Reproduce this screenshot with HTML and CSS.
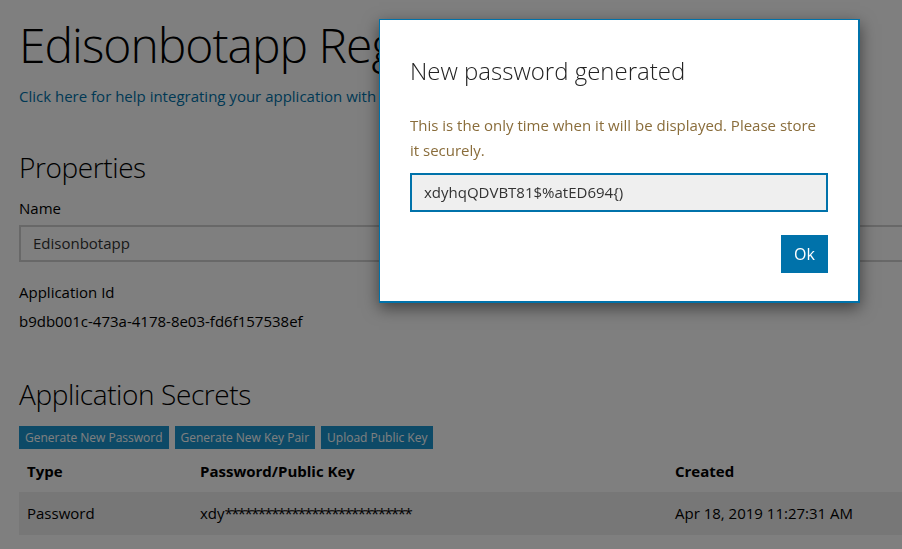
FILE: index.html
```html
<!DOCTYPE html>
<html>
<head>
<meta charset="utf-8">
<link rel="stylesheet" href="styles.css">
</head>
<body>
<div class="page">
  <h1 class="title">Edisonbotapp Registration</h1>
  <a class="help" href="#">Click here for help integrating your application with Microsoft.</a>

  <h2 class="section">Properties</h2>
  <div class="label label-name">Name</div>
  <div class="field">Edisonbotapp</div>
  <div class="label label-id">Application Id</div>
  <div class="value">b9db001c-473a-4178-8e03-fd6f157538ef</div>

  <h2 class="section section-secrets">Application Secrets</h2>
  <div class="actions">
    <button class="btn">Generate New Password</button>
    <button class="btn">Generate New Key Pair</button>
    <button class="btn">Upload Public Key</button>
  </div>
  <table class="grid">
    <thead>
      <tr><th class="c1">Type</th><th class="c2">Password/Public Key</th><th class="c3">Created</th></tr>
    </thead>
    <tbody>
      <tr class="odd"><td>Password</td><td>xdy<span class="mask">****************************</span></td><td>Apr 18, 2019 11:27:31 AM</td></tr>
    </tbody>
  </table>
</div>

<div class="overlay"></div>
<div class="modal">
  <h3 class="modal-title">New password generated</h3>
  <p class="warn">This is the only time when it will be displayed. Please store it securely.</p>
  <div class="secret">xdyhqQDVBT81$%atED694{)</div>
  <div class="modal-foot"><button class="ok">Ok</button></div>
</div>
</body>
</html>
```
FILE: styles.css
```css
html, body {
  margin: 0;
  padding: 0;
  background: #ffffff;
  overflow: hidden;
  width: 902px;
  height: 549px;
}
body {
  font-family: "Open Sans", "Noto Sans", sans-serif;
  color: #000;
  font-size: 15px;
}
.page {
  width: 1000px;
  padding: 13px 0 0 19px;
  box-sizing: border-box;
}
.title {
  margin: 0;
  font-size: 48px;
  font-weight: 300;
  line-height: 64px;
  letter-spacing: -1px;
}
.help {
  display: block;
  margin-top: 8px;
  color: #0072aa;
  text-decoration: none;
  font-size: 15px;
  line-height: 22px;
}
.section {
  margin: 40px 0 0;
  font-size: 28px;
  font-weight: 300;
  line-height: 40px;
  letter-spacing: -0.4px;
}
.label {
  font-size: 15px;
  line-height: 24px;
}
.label-name {
  margin-top: 9px;
}
.field {
  margin-top: 5px;
  height: 33px;
  border: 2px solid #d0d0d0;
  padding: 0 12px;
  line-height: 33px;
  font-size: 15px;
  color: #333;
}
.label-id {
  margin-top: 18px;
}
.value {
  margin-top: 5px;
  line-height: 24px;
  font-size: 15px;
}
.section-secrets {
  margin-top: 41px;
}
.actions {
  display: flex;
  gap: 6px;
  margin-top: 12px;
}
.btn {
  border: 0;
  margin: 0;
  background: #1a95cf;
  color: #fff;
  font-family: inherit;
  font-size: 12px;
  height: 23px;
  padding: 0 6px;
  line-height: 23px;
}
.grid {
  border-collapse: collapse;
  width: 980px;
  margin-top: 1px;
  font-size: 15px;
}
.grid th {
  text-align: left;
  font-weight: 700;
  padding: 8px 8px 7px;
  line-height: 27px;
}
.grid td {
  padding: 8px 8px;
  line-height: 27px;
}
.grid .c1 { width: 157px; }
.grid .c2 { width: 459px; }
.grid tr.odd { background: #eeeeee; }
.mask {
  letter-spacing: -1.6px;
}
.overlay {
  position: fixed;
  inset: 0;
  background: rgba(0, 0, 0, 0.5);
}
.modal {
  position: absolute;
  left: 379px;
  top: 19px;
  width: 418px;
  height: 281px;
  padding: 0 30px 0 30px;
  background: #fff;
  border: 1px solid #0072aa;
  border-right-width: 2px;
  border-bottom-width: 2px;
  box-shadow: 0 5px 15px rgba(0, 0, 0, 0.5);
}
.modal-title {
  margin: 33px 0 0;
  font-size: 24px;
  font-weight: 300;
  line-height: 36px;
  color: #222;
}
.warn {
  margin: 24px 0 0;
  color: #8a6d3b;
  font-size: 15px;
  line-height: 25px;
}
.secret {
  margin-top: 10px;
  height: 35px;
  border: 2px solid #0072aa;
  background: #efefef;
  padding: 0 12px;
  line-height: 35px;
  font-size: 15px;
  color: #333;
}
.modal-foot {
  display: flex;
  justify-content: flex-end;
  margin-top: 23px;
}
.ok {
  border: 0;
  background: #0072aa;
  color: #fff;
  font-family: inherit;
  font-size: 16px;
  width: 47px;
  height: 38px;
  padding: 0;
}
```
